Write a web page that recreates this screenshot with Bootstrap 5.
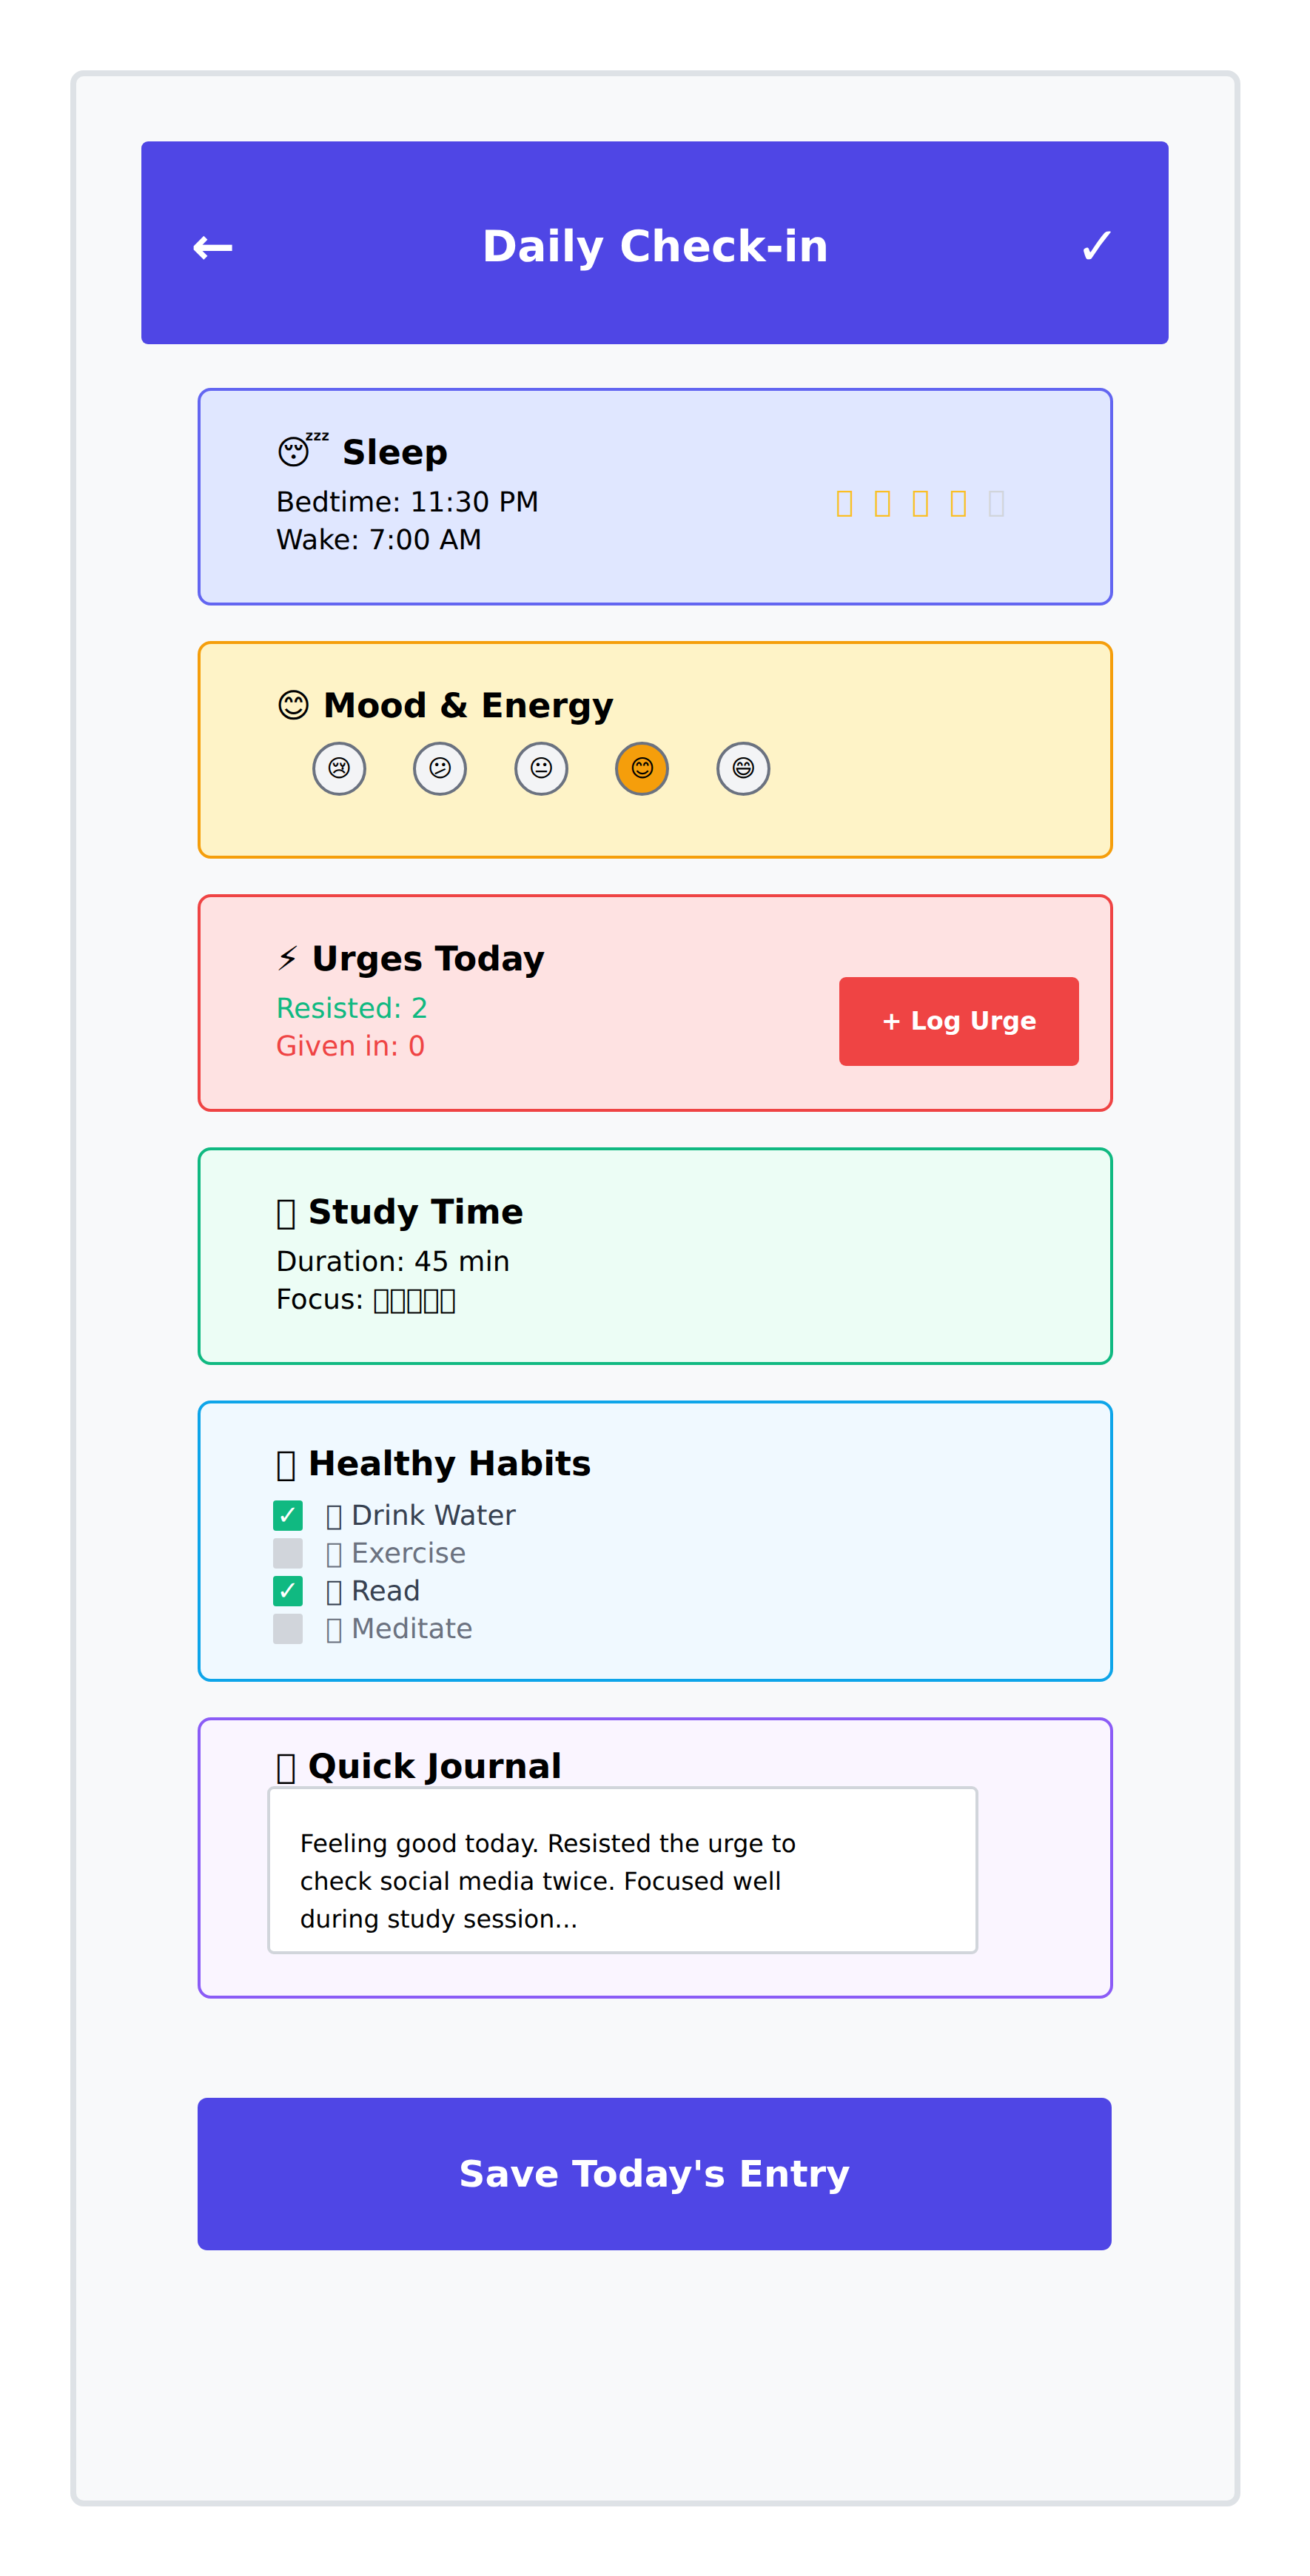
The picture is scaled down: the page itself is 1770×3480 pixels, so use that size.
<!DOCTYPE html>
<html lang="en">

<head>
    <meta charset="UTF-8">
    <meta name="viewport" content="width=device-width, initial-scale=1.0">
    <title>Daily Check-in</title>

    <link href="https://cdn.jsdelivr.net/npm/bootstrap@5.3.3/dist/css/bootstrap.min.css" rel="stylesheet">

    <style>
        body {
            font-family: "DejaVu Sans", sans-serif;
            background: #fff;
            color: #000;
            font-size: 37.4px;
            line-height: 51px;
            text-rendering: geometricPrecision;
        }

        .page-wrap {
            padding: 94.5px;
        }

        .phone-frame {
            width: 1581px;
            height: 3291px;
            padding: 88.65px;
            background: #f8f9fa;
            border: 8.85px solid #dee2e6;
            border-radius: 18px;
        }

        .top-bar {
            height: 274px;
            padding: 11px 66px 0 67px;
            margin-bottom: 58.5px;
            background: #4f46e5;
            border-radius: 9px;
            color: #fff;
        }

        .top-title {
            font-size: 58.4px;
            font-weight: 700;
            line-height: 1;
        }

        .top-icon {
            font-size: 70.8px;
            line-height: 1;
        }

        .top-back { font-weight: 700; }

        .checkin-list {
            margin: 0 75px 0 75.5px;
            gap: 48px;
        }

        .checkin-card {
            height: 294px;
            padding: 58px 40px 0 102px;
            border: 4.4px solid;
            border-radius: 18px;
            color: #000;
        }

        .card-sleep { background: #e0e7ff; border-color: #6366f1; }
        .card-mood { background: #fef3c7; border-color: #f59e0b; }
        .card-urge { background: #fee2e2; border-color: #ef4444; }
        .card-study { background: #ecfdf5; border-color: #10b981; }
        .card-habits { background: #f0f9ff; border-color: #0ea5e9; height: 380px; padding-top: 56px; }
        .card-journal { background: #faf5ff; border-color: #8b5cf6; height: 380px; padding-top: 37.6px; }

        .card-heading {
            font-size: 45.8px;
            font-weight: 700;
            line-height: 51px;
            margin-bottom: 16px;
        }

        .star-row {
            margin-right: 74px;
            color: #fbbf24;
            font-size: 39.8px;
        }

        .star-row span { width: 51.3px; }
        .star-off { color: #d1d5db; }

        .mood-row {
            margin: 23px 0 0 49px;
            gap: 63.6px;
        }

        .mood-dot {
            width: 73px;
            height: 73px;
            background: #f3f4f6;
            border: 4.4px solid #6b7280;
            border-radius: 50%;
            font-size: 32.5px;
        }

        .mood-dot.is-picked { background: #f59e0b; }

        .text-resisted { color: #10b981; }
        .text-given { color: #ef4444; }

        .log-btn {
            width: 324px;
            height: 120px;
            margin: -17px 2px 0 0;
            background: #ef4444;
            border: 0;
            border-radius: 9px;
            color: #fff;
            font-size: 33.5px;
            font-weight: 700;
        }

        .habit-list { margin: 3px 0 0 -3.5px; }

        .habit-box {
            width: 40px;
            height: 41px;
            margin-right: 31px;
            background: #d1d5db;
            border-radius: 4px;
            color: #fff;
            font-size: 35.4px;
        }

        .habit-box.is-done { background: #10b981; }
        .habit-on { color: #374151; }
        .habit-off { color: #6b7280; }

        .journal-box {
            width: 960.5px;
            height: 227px;
            margin: -15.5px 0 0 -11.5px;
            padding: 48px 0 0 40px;
            background: #fff;
            border: 4.4px solid #d1d5db;
            border-radius: 9px;
            font-size: 33.3px;
        }

        .save-btn {
            display: block;
            width: 1235px;
            height: 206px;
            margin: 134.5px 0 0 75.5px;
            background: #4f46e5;
            border: 0;
            border-radius: 13px;
            color: #fff;
            font-size: 50px;
            font-weight: 700;
        }
    </style>
</head>

<body>
    <div class="page-wrap">
        <div class="phone-frame">
            <!-- Barra in alto -->
            <div class="top-bar d-flex justify-content-between align-items-center">
                <span class="top-icon top-back">←</span>
                <span class="top-title">Daily Check-in</span>
                <span class="top-icon">✓</span>
            </div>

            <div class="checkin-list d-flex flex-column">
                <div class="card checkin-card card-sleep">
                    <div class="card-heading">😴 Sleep</div>
                    <div class="d-flex justify-content-between align-items-start">
                        <div>Bedtime: 11:30 PM<br>Wake: 7:00 AM</div>
                        <div class="star-row d-flex">
                            <span>&#xE000;</span><span>&#xE000;</span><span>&#xE000;</span><span>&#xE000;</span><span class="star-off">&#xE000;</span>
                        </div>
                    </div>
                </div>

                <div class="card checkin-card card-mood">
                    <div class="card-heading mb-0">😊 Mood &amp; Energy</div>
                    <div class="mood-row d-flex">
                        <div class="mood-dot d-flex align-items-center justify-content-center">😢</div>
                        <div class="mood-dot d-flex align-items-center justify-content-center">😕</div>
                        <div class="mood-dot d-flex align-items-center justify-content-center">😐</div>
                        <div class="mood-dot is-picked d-flex align-items-center justify-content-center">😊</div>
                        <div class="mood-dot d-flex align-items-center justify-content-center">😄</div>
                    </div>
                </div>

                <div class="card checkin-card card-urge">
                    <div class="card-heading">⚡ Urges Today</div>
                    <div class="d-flex justify-content-between align-items-start">
                        <div><span class="text-resisted">Resisted: 2</span><br><span class="text-given">Given in: 0</span></div>
                        <button class="btn log-btn">+ Log Urge</button>
                    </div>
                </div>

                <div class="card checkin-card card-study">
                    <div class="card-heading">&#xE000; Study Time</div>
                    <div>Duration: 45 min<br>Focus: &#xE000;&#xE000;&#xE000;&#xE000;&#xE000;</div>
                </div>

                <div class="card checkin-card card-habits">
                    <div class="card-heading">&#xE000; Healthy Habits</div>
                    <div class="habit-list">
                        <div class="habit-on d-flex align-items-center"><span class="habit-box is-done d-flex align-items-center justify-content-center">✓</span>&#xE000; Drink Water</div>
                        <div class="habit-off d-flex align-items-center"><span class="habit-box"></span>&#xE000; Exercise</div>
                        <div class="habit-on d-flex align-items-center"><span class="habit-box is-done d-flex align-items-center justify-content-center">✓</span>&#xE000; Read</div>
                        <div class="habit-off d-flex align-items-center"><span class="habit-box"></span>&#xE000; Meditate</div>
                    </div>
                </div>

                <div class="card checkin-card card-journal">
                    <div class="card-heading">&#xE000; Quick Journal</div>
                    <div class="journal-box">Feeling good today. Resisted the urge to<br>check social media twice. Focused well<br>during study session...</div>
                </div>
            </div>

            <button class="btn save-btn">Save Today's Entry</button>
        </div>
    </div>

    <script src="https://cdn.jsdelivr.net/npm/bootstrap@5.3.3/dist/js/bootstrap.bundle.min.js"></script>
</body>

</html>
